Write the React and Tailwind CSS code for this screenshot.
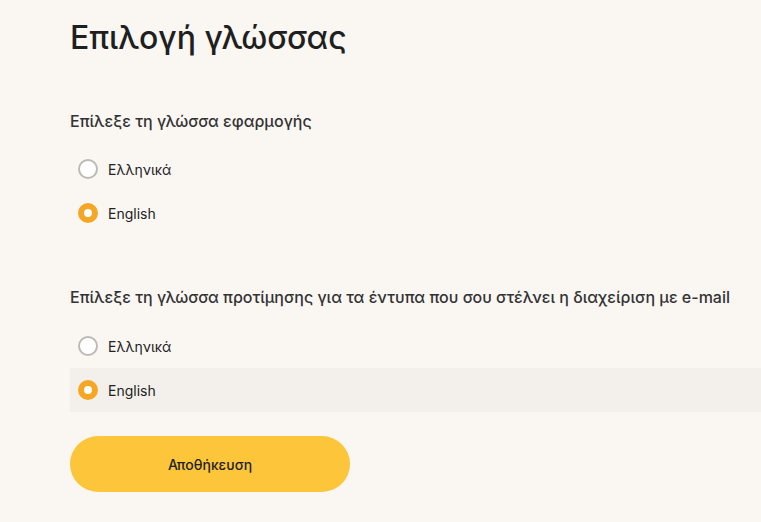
import { useState } from "react";

const Radio = ({ checked }) => (
  <span
    className={
      checked
        ? "w-5 h-5 rounded-full border-[6px] border-[#f5a623] bg-white shrink-0"
        : "w-5 h-5 rounded-full border-2 border-[#bdbab5] bg-white shrink-0"
    }
  />
);

const Option = ({ label, checked, highlight, onClick }) => (
  <div
    onClick={onClick}
    className={`h-[44px] flex items-center gap-[10px] pl-2 cursor-pointer ${
      highlight ? "bg-[#f3f0eb]" : ""
    }`}
  >
    <Radio checked={checked} />
    <span className="text-[14px] text-[#222]">{label}</span>
  </div>
);

const App = () => {
  const [appLang, setAppLang] = useState("en");
  const [mailLang, setMailLang] = useState("en");

  return (
    <div
      className="min-h-[522px] bg-[#faf7f3] pl-[70px] pt-[18px] pb-8"
      style={{ fontFamily: "Inter, 'Noto Sans', sans-serif" }}
    >
      <h1 className="text-[32px] leading-[40px] font-medium text-[#1f1f1f]">
        Επιλογή γλώσσας
      </h1>

      {/* App language */}
      <p className="mt-[51px] text-[16px] leading-6 font-medium text-[#333]">
        Επίλεξε τη γλώσσα εφαρμογής
      </p>
      <div className="mt-[14px]">
        <Option label="Ελληνικά" checked={appLang === "el"} onClick={() => setAppLang("el")} />
        <Option label="English" checked={appLang === "en"} onClick={() => setAppLang("en")} />
      </div>

      {/* Mail language */}
      <p className="mt-[50px] text-[16px] leading-6 font-medium text-[#333]">
        Επίλεξε τη γλώσσα προτίμησης για τα έντυπα που σου στέλνει η διαχείριση με e-mail
      </p>
      <div className="mt-[15px]">
        <Option label="Ελληνικά" checked={mailLang === "el"} onClick={() => setMailLang("el")} />
        <Option
          label="English"
          checked={mailLang === "en"}
          highlight
          onClick={() => setMailLang("en")}
        />
      </div>

      <button className="mt-6 w-[280px] h-14 rounded-full bg-[#fcc53a] text-[14px] font-medium text-[#222]">
        Αποθήκευση
      </button>
    </div>
  );
};

export default App;
